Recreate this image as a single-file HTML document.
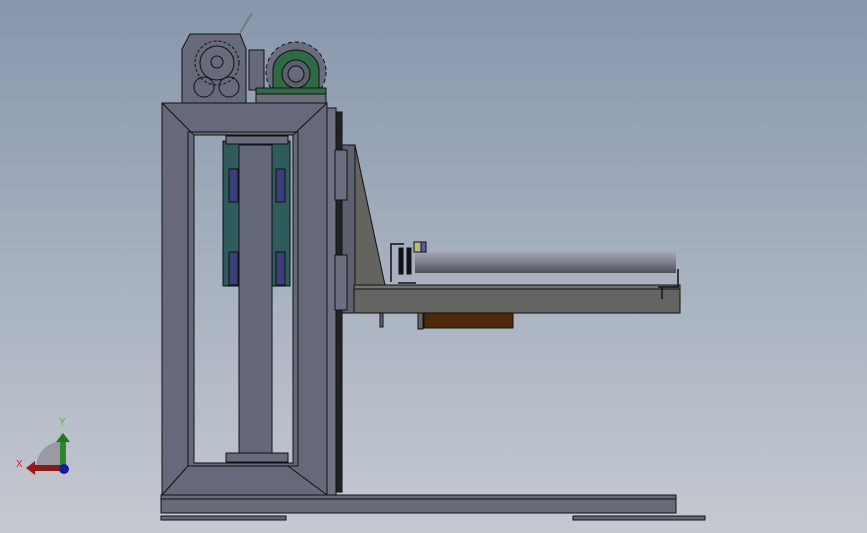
<!DOCTYPE html><html><head><style>html,body{margin:0;padding:0;width:867px;height:533px;overflow:hidden}body{background:linear-gradient(#8797ad,#c5c9d1)}</style></head><body>
<svg width="867" height="533" viewBox="0 0 867 533" style="position:absolute;left:0;top:0" stroke="#111" stroke-width="1">
<defs><linearGradient id="r" x1="0" y1="0" x2="0" y2="1"><stop offset="0" stop-color="#a2a4b4"/><stop offset=".5" stop-color="#7d7f8e"/><stop offset="1" stop-color="#4c4e5a"/></linearGradient></defs>
<!-- top unit -->
<line x1="240" y1="33" x2="252" y2="13" stroke="#777" stroke-width="2"/>
<path d="M190 34h50l6 15v54h-64v-54z" fill="#676a7a"/>
<circle cx="217" cy="63" r="22" fill="#676a7a" stroke-dasharray="3 2"/>
<circle cx="217" cy="63" r="17" fill="#686b7b"/>
<circle cx="217" cy="62" r="6" fill="#676a7a"/>
<circle cx="204" cy="87" r="10" fill="none"/><circle cx="229" cy="87" r="10" fill="none"/>
<rect x="249" y="50" width="15" height="40" fill="#676a7a"/>
<circle cx="296" cy="72" r="30" fill="#6a6d7d" stroke-dasharray="4 3"/>
<path d="M273 88v-18a23 20 0 0 1 46 0v18z" fill="#2e6b44"/>
<circle cx="296" cy="74" r="14" fill="#5b5e6c"/><circle cx="296" cy="74" r="8" fill="#676a7a"/>
<rect x="256" y="88" width="70" height="6" fill="#2e6b44"/>
<rect x="256" y="94" width="70" height="9" fill="#6a6d7b"/>
<!-- frame -->
<path d="M162 103h165v392h-165z M194 135v328h99v-328z" fill="#666979" fill-rule="evenodd"/>
<line x1="162" y1="103" x2="194" y2="135"/><line x1="327" y1="103" x2="293" y2="135"/>
<line x1="162" y1="495" x2="188" y2="466"/><line x1="327" y1="495" x2="288" y2="466"/>
<rect x="188" y="132" width="110" height="334" fill="none"/>
<rect x="223" y="141" width="67" height="145" fill="#2e5c5c"/>
<rect x="229" y="169" width="9" height="33" fill="#3d3f7a"/><rect x="276" y="169" width="9" height="33" fill="#3d3f7a"/>
<rect x="229" y="252" width="9" height="33" fill="#3d3f7a"/><rect x="276" y="252" width="9" height="33" fill="#3d3f7a"/>
<rect x="226" y="136" width="62" height="8" fill="#6a6d7b"/>
<rect x="239" y="145" width="33" height="308" fill="#656878"/>
<rect x="226" y="453" width="62" height="9" fill="#676a7a"/>
<rect x="327" y="108" width="9" height="387" fill="#6f7282"/>
<rect x="336" y="112" width="6" height="380" fill="#222"/>
<!-- arm -->
<rect x="342" y="145" width="13" height="168" fill="#5e6070"/>
<rect x="335" y="150" width="12" height="50" fill="#6b6e7e"/><rect x="335" y="255" width="12" height="55" fill="#6b6e7e"/>
<path d="M355 145l30 140h-30z" fill="#636460"/>
<rect x="354" y="285" width="326" height="28" fill="#646560"/>
<rect x="354" y="285" width="326" height="4" fill="#707170"/>
<rect x="380" y="313" width="3" height="14" fill="#666"/>
<rect x="418" y="313" width="5" height="16" fill="#666"/>
<rect x="424" y="313" width="89" height="15" fill="#4f2a08"/>
<rect x="415" y="252" width="261" height="21" fill="url(#r)" stroke="none"/>
<path d="M391 282v-38h13M398 283h18" fill="none" stroke-width="1.5"/>
<rect x="399" y="248" width="4" height="26" fill="#111"/><rect x="407" y="248" width="4" height="26" fill="#111"/>
<rect x="414" y="242" width="7" height="10" fill="#bcb87a"/><rect x="421" y="242" width="5" height="10" fill="#5a5aaa"/>
<path d="M658 287h20v-18M662 287v12" fill="none" stroke-width="1.5"/>
<!-- base -->
<rect x="161" y="495" width="515" height="18" fill="#686a7a"/>
<line x1="161" y1="499" x2="676" y2="499"/>
<rect x="161" y="516" width="125" height="4" fill="#666878"/>
<rect x="573" y="516" width="132" height="4" fill="#666878"/>
<!-- triad -->
<path d="M36 468a27 27 0 0 1 27-27v27z" fill="#999aa3" stroke="none"/>
<rect x="60" y="441" width="6" height="26" fill="#2a8a2a" stroke="none"/><path d="M56 442l7-9 7 9z" fill="#1f7a1f" stroke="none"/>
<rect x="34" y="465" width="29" height="6" fill="#8a1a1a" stroke="none"/><path d="M35 461l-9 7 9 7z" fill="#a01515" stroke="none"/>
<circle cx="64" cy="469" r="5" fill="#1a1aa0" stroke="none"/>
<text x="59" y="425" font-family="Liberation Sans" font-size="10" fill="#3c3" stroke="none">Y</text>
<text x="16" y="467" font-family="Liberation Sans" font-size="10" fill="#d22" stroke="none">X</text>
</svg></body></html>
